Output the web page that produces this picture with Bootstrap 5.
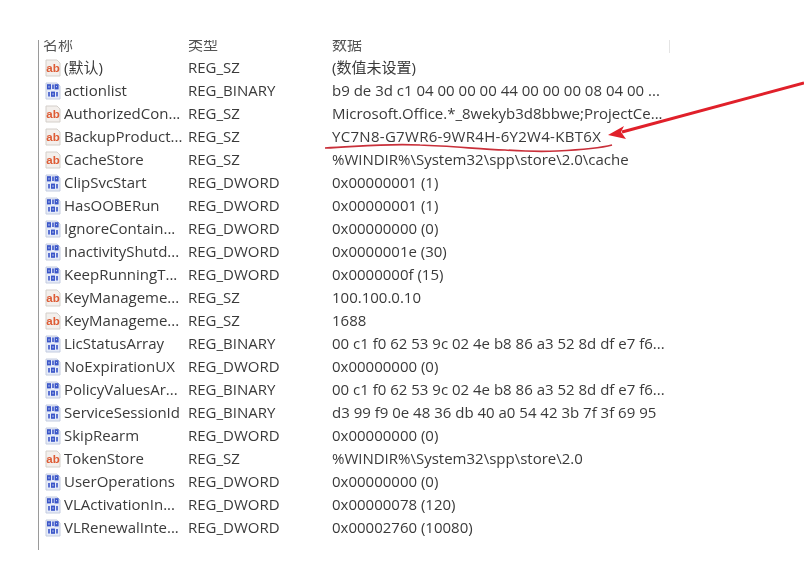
<!DOCTYPE html>
<html lang="en">
<head>
  <meta charset="UTF-8">
  <title>Registry Editor</title>
  <link href="https://cdn.jsdelivr.net/npm/bootstrap@5.3.3/dist/css/bootstrap.min.css" rel="stylesheet">
  <style>
    body {
      background-color: #fff;
      color: #3a3a3a;
      font-family: "Open Sans", "Noto Sans CJK SC", sans-serif;
      font-size: 15px;
      height: 577px;
      overflow: hidden;
    }
    .shot {
      height: 577px;
      padding: 40px 0 27px 38px;
    }
    .reg-pane {
      height: 510px;
      border-left: 1px solid #9a9a9a;
      overflow: hidden;
      filter: blur(0.55px);
    }
    .reg-head {
      height: 17px;
      margin-top: -4px;
      margin-bottom: 3px;
      line-height: 17px;
      color: #555;
    }
    .reg-row {
      height: 23px;
      line-height: 23px;
      white-space: nowrap;
    }
    .cell-name { width: 149px; padding-left: 4px; }
    .cell-type { width: 144px; }
    .cell-data { width: 338px; }
    .cell-icon { width: 20px; height: 20px; margin-right: 1px; flex: none; }
    .head-rule { border-right: 1px solid #e4e4e4; }
    .key-text { letter-spacing: .3px; }
    .overlay {
      position: absolute;
      left: 0;
      top: 0;
      pointer-events: none;
    }
  </style>
</head>
<body>

<div class="shot">
  <div class="reg-pane" id="pane">
    <div class="reg-head d-flex">
      <div class="cell-name">名称</div>
      <div class="cell-type">类型</div>
      <div class="cell-data head-rule">数据</div>
    </div>
  </div>
</div>

<svg class="overlay" width="804" height="577" viewBox="0 0 804 577">
  <path d="M325 148c30-1 60-5 95-3 30 1 60 4 85 5 15 1 32 2 52 1 20-1 40-2 55-6" fill="none" stroke="#c9303a" stroke-width="1.7"/>
  <path d="M804 83 622 132" fill="none" stroke="#e0202a" stroke-width="3"/>
  <path d="M608 135 624 126 621 132 626 139z" fill="#e0202a"/>
</svg>

<script>
  const icons = {
    sz: `<svg class="cell-icon" viewBox="0 0 20 20">
           <path d="M3 2h11l3 3v13H3z" fill="#f3efec" stroke="#d4cfca"/>
           <text x="10" y="14" text-anchor="middle" font-family="Liberation Sans, sans-serif" font-size="11.5" font-weight="700" fill="#de5b34">ab</text>
         </svg>`,
    bin: `<svg class="cell-icon" viewBox="0 0 20 20">
           <path d="M3 2h11l3 3v13H3z" fill="#e6ebf8" stroke="#c4cce0"/>
           <g fill="none" stroke="#3a55c8" stroke-width="1.6">
             <rect x="4.8" y="4" width="2.4" height="3.6"/>
             <path d="M10 3.6v4.4"/>
             <rect x="12.4" y="4" width="2.4" height="3.6"/>
             <path d="M6 11v4.4"/>
             <rect x="8.8" y="11.4" width="2.4" height="3.6"/>
             <path d="M14 11v4.4"/>
           </g>
         </svg>`
  };

  const rows = [
    ['sz', '(默认)', 'REG_SZ', '(数值未设置)'],
    ['bin', 'actionlist', 'REG_BINARY', 'b9 de 3d c1 04 00 00 00 44 00 00 00 08 04 00 ...'],
    ['sz', 'AuthorizedCon...', 'REG_SZ', 'Microsoft.Office.*_8wekyb3d8bbwe;ProjectCe...'],
    ['sz', 'BackupProduct...', 'REG_SZ', '<span class="key-text">YC7N8-G7WR6-9WR4H-6Y2W4-KBT6X</span>'],
    ['sz', 'CacheStore', 'REG_SZ', '%WINDIR%\\System32\\spp\\store\\2.0\\cache'],
    ['bin', 'ClipSvcStart', 'REG_DWORD', '0x00000001 (1)'],
    ['bin', 'HasOOBERun', 'REG_DWORD', '0x00000001 (1)'],
    ['bin', 'IgnoreContain...', 'REG_DWORD', '0x00000000 (0)'],
    ['bin', 'InactivityShutd...', 'REG_DWORD', '0x0000001e (30)'],
    ['bin', 'KeepRunningT...', 'REG_DWORD', '0x0000000f (15)'],
    ['sz', 'KeyManageme...', 'REG_SZ', '100.100.0.10'],
    ['sz', 'KeyManageme...', 'REG_SZ', '1688'],
    ['bin', 'LicStatusArray', 'REG_BINARY', '00 c1 f0 62 53 9c 02 4e b8 86 a3 52 8d df e7 f6...'],
    ['bin', 'NoExpirationUX', 'REG_DWORD', '0x00000000 (0)'],
    ['bin', 'PolicyValuesAr...', 'REG_BINARY', '00 c1 f0 62 53 9c 02 4e b8 86 a3 52 8d df e7 f6...'],
    ['bin', 'ServiceSessionId', 'REG_BINARY', 'd3 99 f9 0e 48 36 db 40 a0 54 42 3b 7f 3f 69 95'],
    ['bin', 'SkipRearm', 'REG_DWORD', '0x00000000 (0)'],
    ['sz', 'TokenStore', 'REG_SZ', '%WINDIR%\\System32\\spp\\store\\2.0'],
    ['bin', 'UserOperations', 'REG_DWORD', '0x00000000 (0)'],
    ['bin', 'VLActivationIn...', 'REG_DWORD', '0x00000078 (120)'],
    ['bin', 'VLRenewalInte...', 'REG_DWORD', '0x00002760 (10080)']
  ];

  const pane = document.getElementById('pane');
  rows.forEach(r => {
    const row = document.createElement('div');
    row.className = 'reg-row d-flex';
    row.innerHTML =
      `<div class="cell-name d-flex align-items-center">${icons[r[0]]}<span>${r[1]}</span></div>
       <div class="cell-type">${r[2]}</div>
       <div>${r[3]}</div>`;
    pane.appendChild(row);
  });
</script>

<script src="https://cdn.jsdelivr.net/npm/bootstrap@5.3.3/dist/js/bootstrap.bundle.min.js"></script>
</body>
</html>
